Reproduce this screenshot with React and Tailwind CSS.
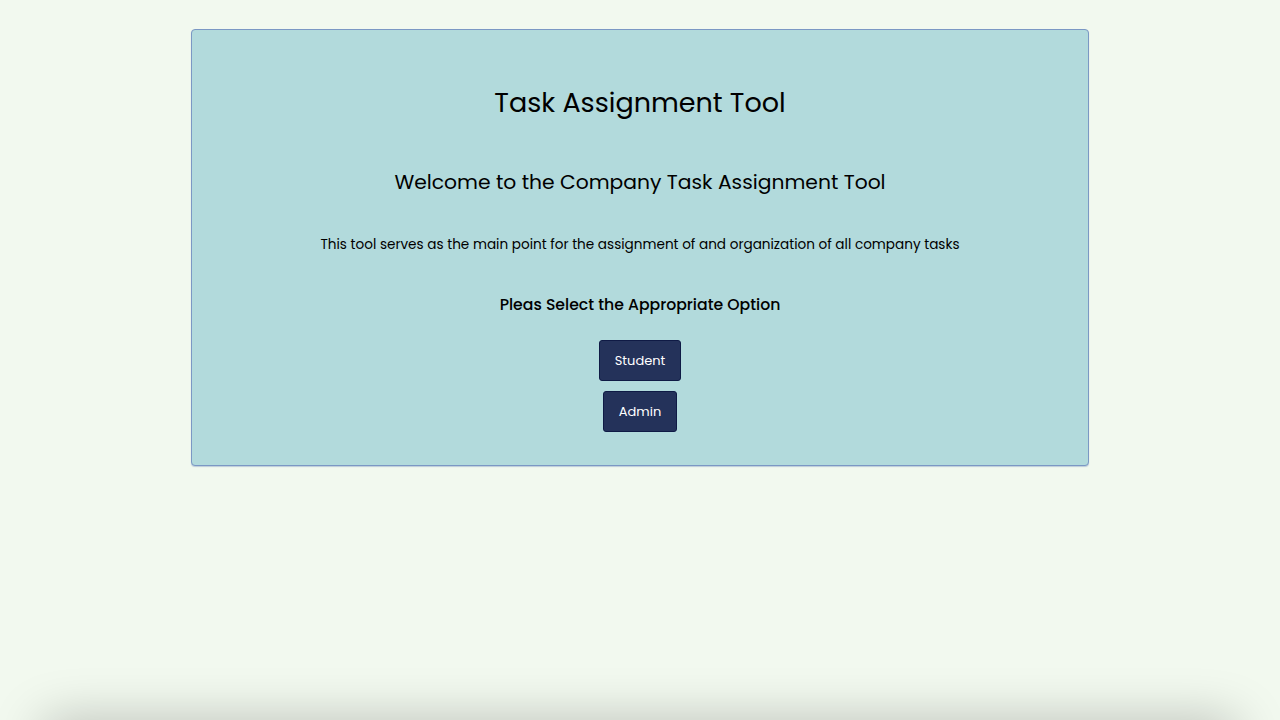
export default function App() {
  return (
    <div className="bg-[#f2f9ef] overflow-hidden" style={{ fontFamily: '"Poppins", "Open Sans", sans-serif' }}>
      <div className="h-[720px] pt-[29px]">
        <div className="w-[898px] mx-auto bg-[#b2dadc] border border-[#7b98c4] rounded-[4px] shadow-[0_1px_1px_rgba(90,120,180,0.35)] flex flex-col items-center pt-[49px] pb-[33px] text-black">
          <h1 className="text-[27px] leading-[48px] font-normal">Task Assignment Tool</h1>
          <h2 className="mt-[37px] text-[20.3px] leading-[36px] font-normal">Welcome to the Company Task Assignment Tool</h2>
          <p className="mt-[34px] text-[13.6px] leading-[22px]">This tool serves as the main point for the assignment of and organization of all company tasks</p>
          <h3 className="mt-[35px] text-[15.7px] leading-[28px] font-medium">Pleas Select the Appropriate Option</h3>
          <button className="mt-[21px] w-[82px] h-[41px] bg-[#24325a] border border-[#0f1a45] rounded-[3px] text-white text-[13px]">Student</button>
          <button className="mt-[10px] w-[74px] h-[41px] bg-[#24325a] border border-[#0f1a45] rounded-[3px] text-white text-[13px]">Admin</button>
        </div>
      </div>
      <div className="mx-[40px] h-[40px] rounded-[30px] shadow-[0_0_50px_rgba(0,0,0,0.25)] bg-[#f2f9ef]"></div>
    </div>
  );
}
